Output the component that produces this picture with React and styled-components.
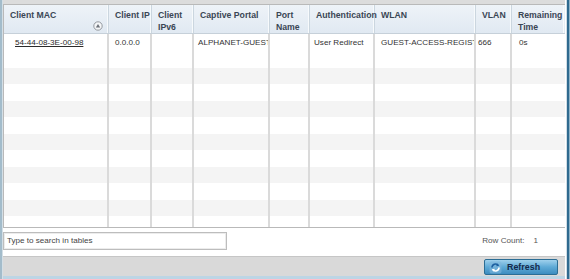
import React from "react";
import styled, { createGlobalStyle } from "styled-components";

const Global = createGlobalStyle`
  html, body { margin: 0; padding: 0; background: #ffffff; }
  body { font-family: "Liberation Sans", Arial, sans-serif; }
`;

const COLS = [
  { key: "mac", label: ["Client MAC"], w: 105, pad: 11, sort: true },
  { key: "ip", label: ["Client IP"], w: 43, pad: 6 },
  { key: "ipv6", label: ["Client", "IPv6"], w: 42, pad: 6 },
  { key: "portal", label: ["Captive Portal"], w: 76, pad: 4 },
  { key: "port", label: ["Port", "Name"], w: 40, pad: 5 },
  { key: "auth", label: ["Authentication"], w: 65, pad: 4 },
  { key: "wlan", label: ["WLAN"], w: 101, pad: 6 },
  { key: "vlan", label: ["VLAN"], w: 36, pad: 2 },
  { key: "time", label: ["Remaining", "Time"], w: 52, pad: 7 },
];

const TEMPLATE = COLS.map((c) => `${c.w}px`).join(" ");

const ROW = {
  mac: "54-44-08-3E-00-98",
  ip: "0.0.0.0",
  ipv6: "",
  portal: "ALPHANET-GUEST-PORTAL",
  port: "",
  auth: "User Redirect",
  wlan: "GUEST-ACCESS-REGISTRATION",
  vlan: "666",
  time: "0s",
};

const Page = styled.div`
  width: 570px;
  height: 279px;
  display: flex;
  overflow: hidden;
`;

const LeftEdge = styled.div`
  width: 3px;
  flex: none;
  background: linear-gradient(to right, #a3bccb 0, #a3bccb 2px, #d4dfe6 2px);
`;

const RightEdge = styled.div`
  width: 5px;
  flex: none;
  background: linear-gradient(
    to right,
    #ffffff 0,
    #ffffff 1px,
    #d0dce4 1px,
    #d0dce4 2px,
    #2f6a8f 2px,
    #2f6a8f 4px,
    #8fb3c8 4px
  );
`;

const Main = styled.div`
  flex: 1;
  display: flex;
  flex-direction: column;
  min-width: 0;
`;

const TopBar = styled.div`
  height: 4px;
  flex: none;
  background: #dcdcdc;
`;

const Content = styled.div`
  flex: none;
  background: #ffffff;
  display: flex;
  flex-direction: column;
`;

const Table = styled.div`
  height: 224px;
  box-sizing: border-box;
  border: 1px solid #b9b9b9;
  display: flex;
  flex-direction: column;
  overflow: hidden;
  margin-right: -1px;
`;

const HeaderRow = styled.div`
  display: grid;
  grid-template-columns: ${TEMPLATE};
  height: 29px;
  flex: none;
  box-sizing: border-box;
  border-bottom: 1px solid #c6d0d9;
  background: linear-gradient(to bottom, #eef3f8 0%, #e0e9f2 100%);
`;

const HeaderCell = styled.div`
  box-sizing: border-box;
  padding: 4px 4px 0 6px;
  display: flex;
  justify-content: space-between;
  align-items: flex-start;
  border-right: ${(p) => (p.$last ? "none" : "1px solid #cbd6df")};
  box-shadow: inset -1px 0 0 #f7fafc;
  font-weight: bold;
  font-size: 8.7px;
  line-height: 12px;
  color: #3a4654;
  white-space: nowrap;
`;

const HeaderText = styled.div`
  display: flex;
  flex-direction: column;
`;

const SortIcon = styled.svg`
  width: 10px;
  height: 10px;
  margin-top: 12px;
  margin-right: 1px;
  flex: none;
`;

const Body = styled.div`
  flex: 1;
  overflow: hidden;
`;

const Row = styled.div`
  display: grid;
  grid-template-columns: ${TEMPLATE};
  height: ${(p) => p.$h}px;
  background: ${(p) => (p.$striped ? "#f4f4f4" : "#ffffff")};
`;

const Cell = styled.div`
  box-sizing: border-box;
  border-right: ${(p) => (p.$last ? "none" : "2px solid #dadada")};
  padding-left: ${(p) => p.$pad}px;
  font-size: 8.1px;
  line-height: 17px;
  color: #333333;
  white-space: nowrap;
  overflow: hidden;
`;

const MacLink = styled.span`
  text-decoration: underline;
  color: #2b2b2b;
`;

const SearchRow = styled.div`
  height: 28px;
  display: flex;
  align-items: flex-start;
  justify-content: space-between;
  padding-top: 4px;
  box-sizing: border-box;
`;

const SearchBox = styled.div`
  width: 224px;
  height: 18px;
  box-sizing: border-box;
  border: 1px solid #bdbdbd;
  box-shadow: inset 0 0 0 1px #ececec;
  padding-left: 3px;
  font-size: 8.1px;
  line-height: 16px;
  color: #444444;
`;

const RowCount = styled.div`
  display: flex;
  gap: 9px;
  padding-right: 27px;
  font-size: 8.1px;
  line-height: 18px;
  color: #555555;
`;

const Footer = styled.div`
  height: 20px;
  flex: none;
  box-sizing: border-box;
  border-top: 1px solid #c6c6c6;
  background: #d9d9d9;
  display: flex;
  justify-content: flex-end;
  align-items: flex-start;
  padding: 2px 7px 0 0;
`;

const BottomStrip = styled.div`
  height: 3px;
  flex: none;
  background: #bcd5e5;
`;

const RefreshButton = styled.button`
  width: 74px;
  height: 16px;
  box-sizing: border-box;
  border: 1px solid #2c6d94;
  border-radius: 2px;
  background: linear-gradient(to bottom, #9fd0ec 0%, #5eaad6 50%, #3d8cc0 100%);
  display: flex;
  align-items: center;
  padding: 0 0 0 4px;
  gap: 5px;
  font-family: "Liberation Sans", Arial, sans-serif;
  font-weight: bold;
  font-size: 8.9px;
  color: #15284a;
  cursor: pointer;
`;

function RefreshIcon() {
  return (
    <svg width="13" height="13" viewBox="0 0 13 13">
      <rect x="0.5" y="0.5" width="12" height="12" rx="2" fill="#7fb6dc" opacity="0.6" />
      <path d="M3 6.5 A3.5 3.5 0 0 1 9.3 4.4" fill="none" stroke="#1d5fa0" strokeWidth="1.6" />
      <path d="M8 2.3 L10.3 4.8 L7.3 5.2 Z" fill="#1d5fa0" />
      <path d="M10 6.5 A3.5 3.5 0 0 1 3.7 8.6" fill="none" stroke="#ffffff" strokeWidth="1.6" />
      <path d="M5 10.7 L2.7 8.2 L5.7 7.8 Z" fill="#ffffff" />
    </svg>
  );
}

export default function App() {
  const fillers = Array.from({ length: 12 });
  return (
    <>
      <Global />
      <Page>
        <LeftEdge />
        <Main>
          <TopBar />
          <Content>
            <Table>
              <HeaderRow>
                {COLS.map((c, i) => (
                  <HeaderCell key={c.key} $last={i === COLS.length - 1}>
                    <HeaderText>
                      {c.label.map((l) => (
                        <span key={l}>{l}</span>
                      ))}
                    </HeaderText>
                    {c.sort && (
                      <SortIcon viewBox="0 0 10 10">
                        <circle cx="5" cy="5" r="4.2" fill="#f4f6f8" stroke="#8a8f95" strokeWidth="0.9" />
                        <path d="M5 3 L7.2 6.4 L2.8 6.4 Z" fill="#6c7178" />
                      </SortIcon>
                    )}
                  </HeaderCell>
                ))}
              </HeaderRow>
              <Body>
                <Row $h={17}>
                  {COLS.map((c, i) => (
                    <Cell key={c.key} $pad={c.pad} $last={i === COLS.length - 1}>
                      {c.key === "mac" ? <MacLink>{ROW.mac}</MacLink> : ROW[c.key]}
                    </Cell>
                  ))}
                </Row>
                {fillers.map((_, r) => (
                  <Row key={r} $h={16.5} $striped={r % 2 === 1}>
                    {COLS.map((c, i) => (
                      <Cell key={c.key} $pad={c.pad} $last={i === COLS.length - 1} />
                    ))}
                  </Row>
                ))}
              </Body>
            </Table>
            <SearchRow>
              <SearchBox>Type to search in tables</SearchBox>
              <RowCount>
                <span>Row Count:</span>
                <span>1</span>
              </RowCount>
            </SearchRow>
          </Content>
          <Footer>
            <RefreshButton>
              <RefreshIcon />
              Refresh
            </RefreshButton>
          </Footer>
          <BottomStrip />
        </Main>
        <RightEdge />
      </Page>
    </>
  );
}
